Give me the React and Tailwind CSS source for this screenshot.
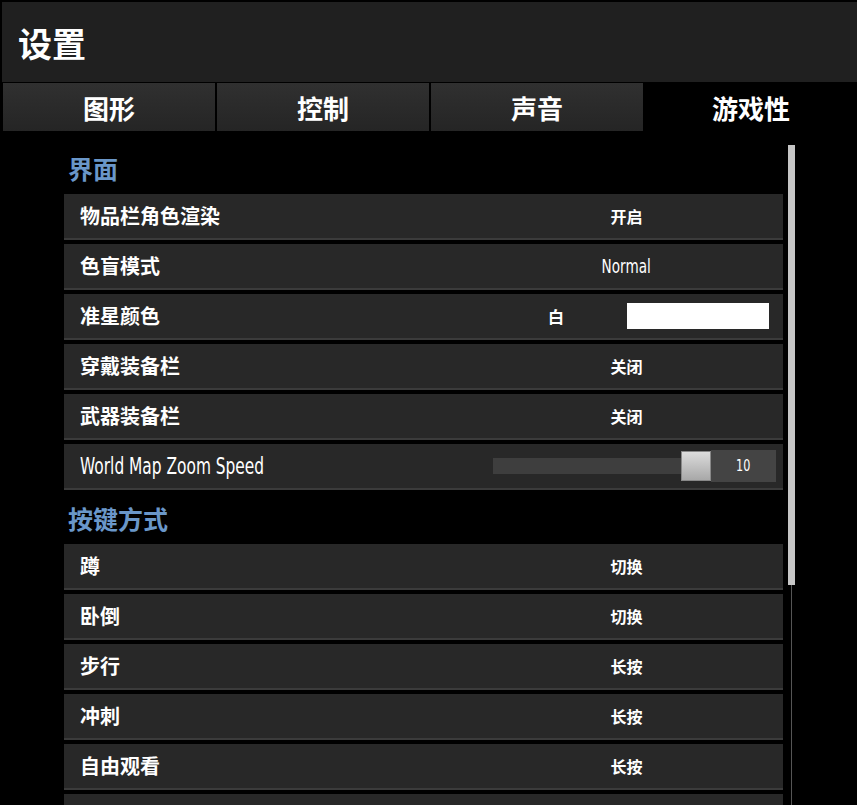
import React from 'react';

const LATIN = '"DejaVu Sans", "Noto Sans CJK SC", sans-serif';
const CJK = '"Noto Sans CJK SC", "DejaVu Sans", sans-serif';

const TABS = ['图形', '控制', '声音', '游戏性'];

const INTERFACE_ROWS = [
  { label: '物品栏角色渲染', value: '开启' },
  { label: '色盲模式', value: 'Normal' },
  { label: '准星颜色', type: 'color', value: '白' },
  { label: '穿戴装备栏', value: '关闭' },
  { label: '武器装备栏', value: '关闭' },
  { label: 'World Map Zoom Speed', type: 'slider', value: 10 },
];

const KEY_ROWS = [
  { label: '蹲', value: '切换' },
  { label: '卧倒', value: '切换' },
  { label: '步行', value: '长按' },
  { label: '冲刺', value: '长按' },
  { label: '自由观看', value: '长按' },
  { label: '', value: '' },
];

const isLatin = s => /^[A-Za-z]/.test(s);

function Value({ row }) {
  if (row.type === 'color') {
    return (
      <div className="flex items-center w-[313px]">
        <span className="w-[157px] pl-[15px] text-center text-[16px] font-bold">{row.value}</span>
        <div className="w-[142px] h-[26px] bg-white" />
      </div>
    );
  }
  if (row.type === 'slider') {
    return (
      <div className="flex items-center w-[313px] pl-[23px]">
        <div className="w-[189px] h-[16px] bg-[#3e3e3e]" />
        <div className="w-[30px] h-[30px] -ml-[1px] bg-gradient-to-b from-[#dcdcdc] to-[#a8a8a8] border border-[#888]" />
        <div className="w-[65px] h-[32px] bg-[#444] flex items-center justify-center">
          <span className="inline-block text-[16px] scale-x-[0.7]" style={{ fontFamily: LATIN }}>
            {row.value}
          </span>
        </div>
      </div>
    );
  }
  if (isLatin(row.value)) {
    return (
      <div className="w-[313px] text-center">
        <span className="inline-block text-[20px] scale-x-[0.68]" style={{ fontFamily: LATIN }}>
          {row.value}
        </span>
      </div>
    );
  }
  return <div className="w-[313px] text-center text-[16px] font-bold">{row.value}</div>;
}

function Row({ row }) {
  return (
    <div className="h-[46px] mb-1 bg-[#282828] border-b-2 border-[#3b3b3b] flex items-center">
      <div className="flex-1 pl-4">
        {isLatin(row.label) ? (
          <span
            className="inline-block text-[23px] scale-x-[0.67] origin-left whitespace-nowrap"
            style={{ fontFamily: LATIN }}
          >
            {row.label}
          </span>
        ) : (
          <span className="text-[20px] font-bold">{row.label}</span>
        )}
      </div>
      <Value row={row} />
    </div>
  );
}

function Section({ title, rows }) {
  return (
    <div>
      <div className="h-[50px] flex items-center pl-1 text-[25px] font-bold text-[#6a97c9]">{title}</div>
      {rows.map((r, i) => (
        <Row key={i} row={r} />
      ))}
    </div>
  );
}

export default function App() {
  return (
    <div className="w-[857px] h-[805px] bg-black overflow-hidden text-white" style={{ fontFamily: CJK }}>
      {/* Header */}
      <div className="ml-[2px] mt-[2px] h-[80px] bg-[#202020] flex items-center pl-4 text-[34px] font-bold">
        设置
      </div>

      {/* Tabs */}
      <div className="flex gap-[2px] pl-[3px] mt-[1px] h-[48px]">
        {TABS.map((t, i) => (
          <div
            key={t}
            className={`flex-1 flex items-center justify-center text-[26px] font-bold ${
              i === 3 ? 'bg-black' : 'bg-gradient-to-b from-[#303030] to-[#252525]'
            }`}
          >
            {t}
          </div>
        ))}
      </div>

      {/* Content */}
      <div className="flex pt-[13px]">
        <div className="w-[719px] ml-[64px]">
          <Section title="界面" rows={INTERFACE_ROWS} />
          <Section title="按键方式" rows={KEY_ROWS} />
        </div>
        <div className="ml-[5px] w-[7px] flex flex-col pt-px">
          <div className="h-[440px] bg-[#c6c6c6]" />
          <div className="w-px flex-1 bg-[#555] mx-auto" />
        </div>
      </div>
    </div>
  );
}
